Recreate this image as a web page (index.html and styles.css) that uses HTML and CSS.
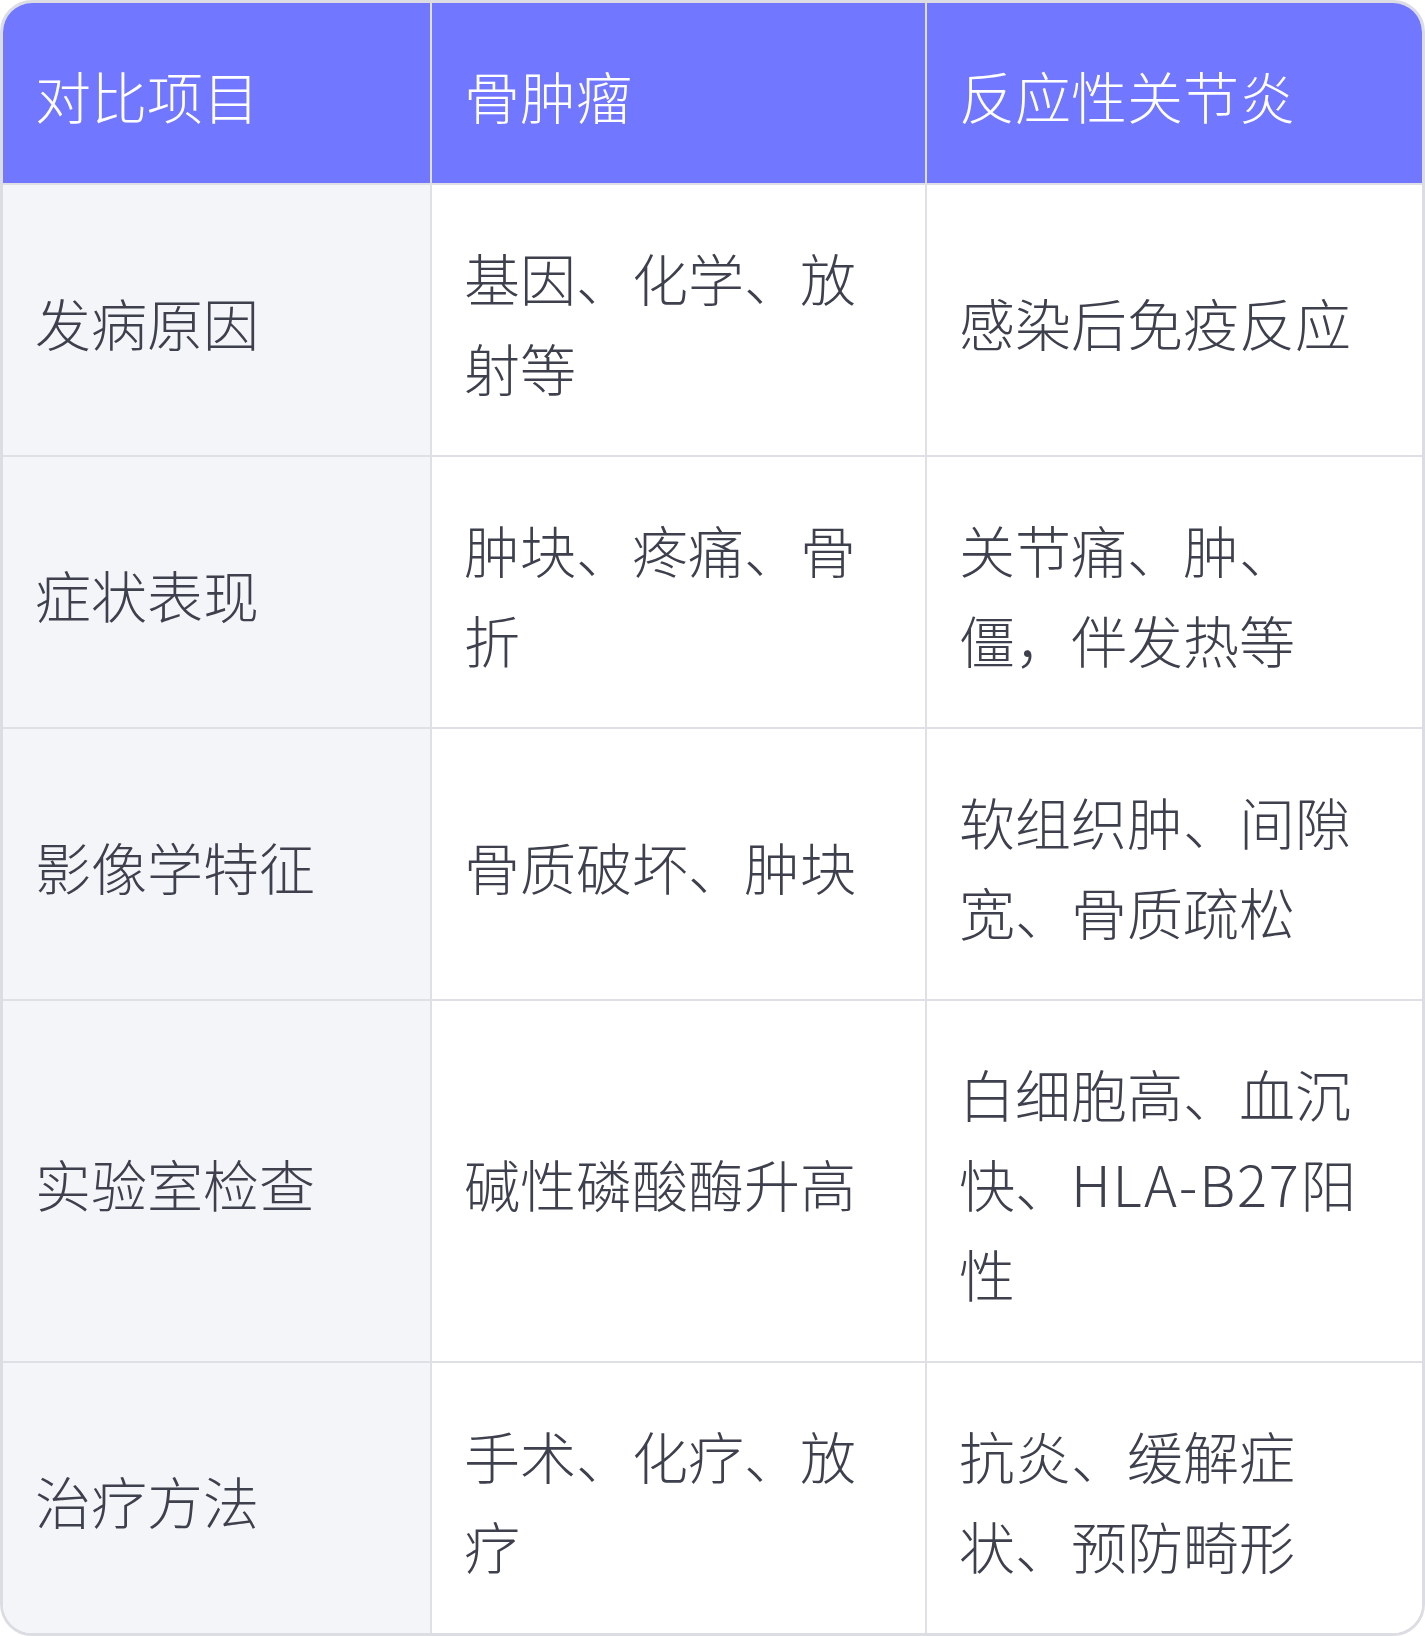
FILE: index.html
```html
<!DOCTYPE html>
<html lang="zh-CN">
<head>
<meta charset="utf-8">
<title>骨肿瘤与反应性关节炎对比</title>
<link rel="stylesheet" href="styles.css">
</head>
<body>
<div class="wrap">
  <table class="cmp">
    <colgroup>
      <col class="c1">
      <col class="c2">
      <col class="c3">
    </colgroup>
    <thead>
      <tr>
        <th>对比项目</th>
        <th>骨肿瘤</th>
        <th>反应性关节炎</th>
      </tr>
    </thead>
    <tbody>
      <tr>
        <td class="key">发病原因</td>
        <td>基因、化学、放射等</td>
        <td>感染后免疫反应</td>
      </tr>
      <tr>
        <td class="key">症状表现</td>
        <td>肿块、疼痛、骨折</td>
        <td>关节痛、肿、僵，伴发热等</td>
      </tr>
      <tr>
        <td class="key">影像学特征</td>
        <td>骨质破坏、肿块</td>
        <td>软组织肿、间隙宽、骨质疏松</td>
      </tr>
      <tr>
        <td class="key">实验室检查</td>
        <td>碱性磷酸酶升高</td>
        <td>白细胞高、血沉快、<span class="latin">HLA-B27</span>阳性</td>
      </tr>
      <tr>
        <td class="key">治疗方法</td>
        <td>手术、化疗、放疗</td>
        <td>抗炎、缓解症状、预防畸形</td>
      </tr>
    </tbody>
  </table>
</div>
</body>
</html>
```

FILE: styles.css
```css
html, body {
  margin: 0;
  padding: 0;
  background: #ffffff;
}

body {
  font-family: "Noto Sans CJK SC Light", "Noto Sans CJK SC DemiLight", "Noto Sans CJK SC", "Noto Sans", sans-serif;
  font-weight: 300;
  color: #3e414d;
}

.wrap {
  width: 1425px;
  height: 1636px;
  box-sizing: border-box;
  border: 3px solid #dcdde2;
  border-radius: 32px;
  overflow: hidden;
  background: #ffffff;
}

.cmp {
  width: 100%;
  border-collapse: collapse;
  table-layout: fixed;
}

.c1 { width: 428px; }
.c2 { width: 495px; }
.c3 { width: auto; }

.cmp th,
.cmp td {
  font-size: 56px;
  line-height: 90px;
  padding: 47px 32px 43px 32px;
  text-align: left;
  vertical-align: middle;
  border: 2px solid #dfe0e6;
  font-weight: 300;
}

.cmp tr > :first-child { border-left: none; }
.cmp tr > :last-child { border-right: none; }
.cmp thead th { border-top: none; }
.cmp tbody tr:last-child td { border-bottom: none; }

.cmp th {
  background: #7177ff;
  color: #ffffff;
}

.cmp td {
  background: #ffffff;
}

.cmp td.key {
  background: #f4f5f9;
}

.latin {
  letter-spacing: 1.8px;
}
```
